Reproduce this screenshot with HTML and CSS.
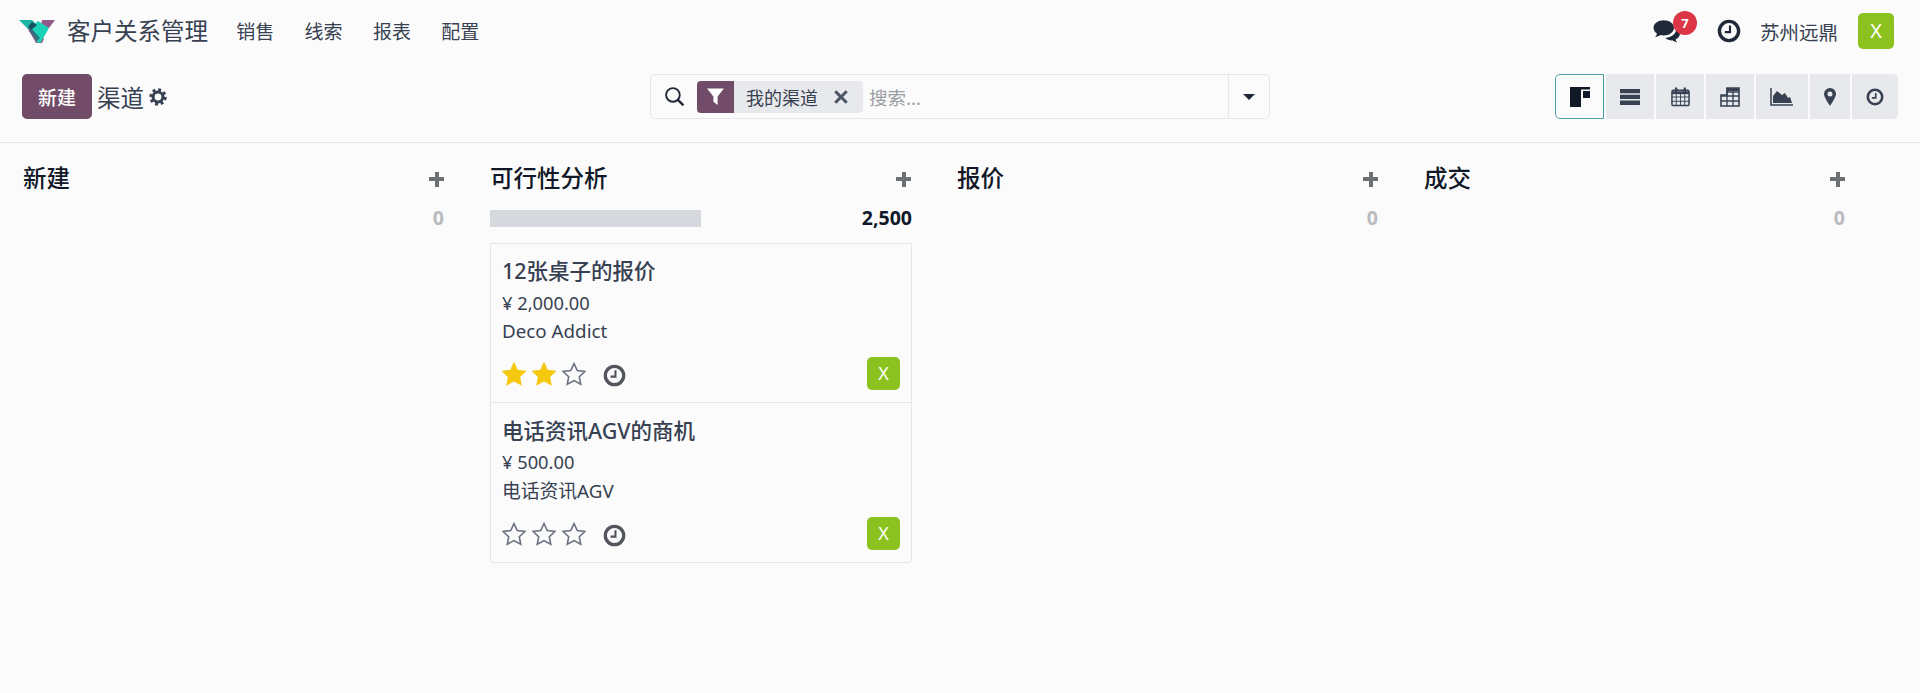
FILE: index.html

```html
<!DOCTYPE html>
<html lang="zh">
<head>
  <meta charset="UTF-8">
  <meta name="viewport" content="width=device-width, initial-scale=1.0">
  <title>客户关系管理</title>
  <link rel="stylesheet" href="styles.css">
</head>
<body>

  <svg class="defs" width="0" height="0" aria-hidden="true">
    <symbol id="clock" viewBox="0 0 24 24">
      <circle cx="12" cy="12" r="9.6" fill="none" stroke="currentColor" stroke-width="3.4"/>
      <path d="M13 6.5v6.7H7.8" fill="none" stroke="currentColor" stroke-width="2.2"/>
    </symbol>
    <symbol id="star" viewBox="0 0 24 24">
      <path d="M12 1.6l3.3 6.9 7.500 1-5.500 5.200 1.400 7.500-6.700-3.600-6.700 3.600 1.400-7.500-5.500-5.200 7.500-1z"/>
    </symbol>
  </svg>

  <!-- Barra superior -->
  <header class="navbar">
    <svg class="logo" viewBox="0 0 36 24" width="36" height="24">
      <path d="M0 1h13l5 5-7 6z" fill="#1ab5a5"/>
      <path d="M23 1h13l-6 8-8-3z" fill="#8f5a8c"/>
      <path d="M9 10l8 14h6l2-4-11-12z" fill="#8f5a8c"/>
      <path d="M12 8l7-6 11 7-8 14c-1 1-3 1-4 0z" fill="#19d2b8"/>
      <path d="M13 3l5 3-6 5-3-3z" fill="#17505f"/>
      <path d="M10 12l3-2 8 9-3 3z" fill="#2d6a78" opacity=".85"/>
    </svg>
    <span class="app-name">客户关系管理</span>
    <nav class="menu">
      <a>销售</a>
      <a>线索</a>
      <a>报表</a>
      <a>配置</a>
    </nav>
    <div class="systray">
      <div class="chat">
        <svg viewBox="0 0 26 22" width="28" height="24">
          <path d="M10 1C4.800 1 .5 4 .5 8c0 2.200 1.300 4.200 3.300 5.500-.4 1.200-1.100 2.300-1.900 3.200 1.800-.2 3.600-.9 5-1.900 1 .3 2 .4 3.100.4 5.200 0 9.500-3.200 9.500-7.200S15.200 1 10 1z" fill="#1f2937"/>
          <path d="M21.500 9c.2 4.500-4.200 8-10 8.500 1.500 1.500 4 2.300 6.500 2.200 1.300 1 2.800 1.700 4.500 1.900-.7-.8-1.200-1.700-1.500-2.800 2.500-1.100 4-3 4-5 0-2-1.500-3.800-3.500-4.800z" fill="#1f2937"/>
        </svg>
        <span class="badge">7</span>
      </div>
      <svg class="clock-top" width="24" height="24"><use href="#clock"/></svg>
      <span class="company">苏州远鼎</span>
      <span class="avatar avatar-big">X</span>
    </div>
  </header>

  <!-- Panel de control -->
  <section class="panel">
    <div class="panel-left">
      <button class="btn-new">新建</button>
      <span class="page-title">渠道</span>
      <svg class="gear" viewBox="0 0 20 20" width="18" height="18">
        <circle cx="10" cy="10" r="5.500" fill="none" stroke="currentColor" stroke-width="3.400"/>
        <circle cx="10" cy="10" r="8" fill="none" stroke="currentColor" stroke-width="3.400" stroke-dasharray="3.200 3.080"/>
      </svg>
    </div>

    <div class="search">
      <svg class="search-icon" viewBox="0 0 20 20" width="21" height="21">
        <circle cx="8.500" cy="8.500" r="6.500" fill="none" stroke="currentColor" stroke-width="1.800"/>
        <path d="M13 13l5.500 5.500" fill="none" stroke="currentColor" stroke-width="2.200"/>
      </svg>
      <div class="facet">
        <span class="facet-icon">
          <svg viewBox="0 0 18 18" width="19" height="19">
            <path d="M1 1.500h16L11 9v8l-4-3V9z" fill="#fff"/>
          </svg>
        </span>
        <span class="facet-text">我的渠道</span>
        <svg class="facet-close" viewBox="0 0 14 14" width="16" height="16">
          <path d="M2 2l10 10M12 2L2 12" fill="none" stroke="currentColor" stroke-width="2.600"/>
        </svg>
      </div>
      <span class="placeholder">搜索...</span>
      <span class="search-drop"><i class="caret"></i></span>
    </div>

    <div class="views">
      <span class="view view-on">
        <svg viewBox="0 0 20 20" width="20" height="20">
          <path d="M0 0h20v2.500H0zM0 2.500h11V20H0zM13 4h7v7h-7z" fill="#111827"/>
        </svg>
      </span>
      <span class="view">
        <svg viewBox="0 0 20 16" width="20" height="16">
          <path d="M0 0h20v4.300H0zM0 5.800h20v4.300H0zM0 11.600h20V16H0z" fill="currentColor"/>
        </svg>
      </span>
      <span class="view">
        <svg viewBox="0 0 20 20" width="19" height="20">
          <rect x="1" y="3" width="18" height="16" rx="1.500" fill="none" stroke="currentColor" stroke-width="1.600"/>
          <path d="M1 5.500h18" stroke="currentColor" stroke-width="3"/>
          <path d="M5.500 0v5M14.500 0v5" stroke="currentColor" stroke-width="2.400"/>
          <path d="M1 10h18M1 14.500h18M5.500 7v12M10 7v12M14.500 7v12" stroke="currentColor" stroke-width="1"/>
        </svg>
      </span>
      <span class="view">
        <svg viewBox="0 0 20 20" width="20" height="20">
          <path d="M7 1h12v18H1V8h6z" fill="none" stroke="currentColor" stroke-width="1.600"/>
          <path d="M7 1h12v3H7z" fill="currentColor"/>
          <path d="M1 9h18M1 14h18M7 1v18M13 1v18M7 5h12" stroke="currentColor" stroke-width="1.300"/>
        </svg>
      </span>
      <span class="view">
        <svg viewBox="0 0 24 18" width="24" height="18">
          <path d="M1 0v17h22" fill="none" stroke="currentColor" stroke-width="1.500"/>
          <path d="M3 15V8l4-5 5 4 3-2 3 5 2-1 2 6z" fill="currentColor"/>
        </svg>
      </span>
      <span class="view">
        <svg viewBox="0 0 12 18" width="12" height="18">
          <path fill-rule="evenodd" d="M6 0a6 6 0 0 0-6 6c0 3.300 6 12 6 12s6-8.700 6-12a6 6 0 0 0-6-6zm0 3.500a2.500 2.500 0 1 1 0 5 2.500 2.500 0 0 1 0-5z" fill="currentColor"/>
        </svg>
      </span>
      <span class="view">
        <svg width="18" height="18"><use href="#clock"/></svg>
      </span>
    </div>
  </section>

  <!-- Kanban -->
  <main class="kanban">
    <div class="columna">
      <div class="col-head"><h3>新建</h3><span class="plus"></span></div>
      <div class="col-total"><span class="total zero">0</span></div>
    </div>

    <div class="columna">
      <div class="col-head"><h3>可行性分析</h3><span class="plus"></span></div>
      <div class="col-total">
        <span class="barra"></span>
        <span class="total">2,500</span>
      </div>
      <div class="tarjetas">
        <article class="tarjeta">
          <h4>12张桌子的报价</h4>
          <p class="precio">¥ 2,000.00</p>
          <p>Deco Addict</p>
          <div class="tarjeta-pie">
            <svg class="star star-on" width="24" height="24"><use href="#star"/></svg>
            <svg class="star star-on" width="24" height="24"><use href="#star"/></svg>
            <svg class="star" width="24" height="24"><use href="#star"/></svg>
            <svg class="clock-card" width="23" height="23"><use href="#clock"/></svg>
            <span class="avatar">X</span>
          </div>
        </article>
        <article class="tarjeta">
          <h4>电话资讯AGV的商机</h4>
          <p class="precio">¥ 500.00</p>
          <p class="cliente">电话资讯AGV</p>
          <div class="tarjeta-pie">
            <svg class="star" width="24" height="24"><use href="#star"/></svg>
            <svg class="star" width="24" height="24"><use href="#star"/></svg>
            <svg class="star" width="24" height="24"><use href="#star"/></svg>
            <svg class="clock-card" width="23" height="23"><use href="#clock"/></svg>
            <span class="avatar">X</span>
          </div>
        </article>
      </div>
    </div>

    <div class="columna">
      <div class="col-head"><h3>报价</h3><span class="plus"></span></div>
      <div class="col-total"><span class="total zero">0</span></div>
    </div>

    <div class="columna">
      <div class="col-head"><h3>成交</h3><span class="plus"></span></div>
      <div class="col-total"><span class="total zero">0</span></div>
    </div>
  </main>

</body>
</html>
```

FILE: styles.css

```css
body {
  font-family: "Noto Sans", "Noto Sans CJK SC", sans-serif;
  background-color: #fbfbfc;
  color: #374151;
  margin: 0;
  height: 693px;
  overflow: hidden;
}

.defs {
  position: absolute;
}

h3, h4, p {
  margin: 0;
}

/* Barra superior */
.navbar {
  display: flex;
  align-items: center;
  height: 60px;
  padding: 2px 26px 0 19px;
  box-sizing: border-box;
}

.logo {
  margin-right: 12px;
}

.app-name {
  font-size: 23.500px;
  line-height: 30px;
}

.menu {
  display: flex;
  margin-left: 13px;
}

.menu a {
  font-size: 19px;
  padding: 0 15.200px;
}

.systray {
  display: flex;
  align-items: center;
  margin-left: auto;
}

.chat {
  position: relative;
  display: flex;
  margin-right: 36px;
  left: 1px;
}

.badge {
  position: absolute;
  top: -8px;
  left: 20px;
  width: 24px;
  height: 24px;
  border-radius: 50%;
  background-color: #dc3545;
  color: #fff;
  font-size: 13px;
  font-weight: 700;
  line-height: 24px;
  text-align: center;
}

.clock-top {
  color: #1f2937;
  margin-left: 1px;
  margin-right: 19px;
}

.company {
  font-size: 19.500px;
  margin-right: 20px;
}

.avatar {
  display: block;
  width: 33px;
  height: 33px;
  margin-left: auto;
  border-radius: 5px;
  background-color: #8cc220;
  color: #fff;
  font-size: 18px;
  line-height: 33px;
  text-align: center;
}

.avatar-big {
  width: 36px;
  height: 36px;
  margin-left: 0;
  font-size: 20px;
  line-height: 36px;
}

/* Panel de control */
.panel {
  display: grid;
  grid-template-columns: 1fr 620px 1fr;
  align-items: center;
  height: 83px;
  padding: 14px 22px 23px 22px;
  box-sizing: border-box;
  border-bottom: 1px solid #e5e7eb;
}

.panel-left {
  display: flex;
  align-items: center;
}

.btn-new {
  width: 70px;
  height: 45px;
  padding: 0;
  border: none;
  border-radius: 5px;
  background-color: #714b67;
  color: #fff;
  font-family: inherit;
  font-size: 19px;
  font-weight: 500;
  cursor: pointer;
}

.page-title {
  font-size: 23.500px;
  margin-left: 5px;
}

.gear {
  margin-left: 5px;
  color: #374151;
}

.search {
  display: flex;
  align-items: center;
  height: 45px;
  box-sizing: border-box;
  border: 1px solid #e5e7eb;
  border-radius: 5px;
}

.search-icon {
  margin: 0 12px 0 13px;
  color: #1f2937;
}

.facet {
  display: flex;
  align-items: center;
  width: 166px;
  height: 32px;
  border-radius: 4px;
  background-color: #e7e9ed;
  overflow: hidden;
}

.facet-icon {
  display: flex;
  align-items: center;
  justify-content: center;
  width: 37px;
  height: 32px;
  background-color: #714b67;
}

.facet-text {
  font-size: 18px;
  margin-left: 12px;
}

.facet-close {
  margin-left: 15px;
  color: #4b5563;
}

.placeholder {
  font-size: 18.500px;
  color: #9a9da3;
  margin-left: 6px;
}

.search-drop {
  display: flex;
  align-items: center;
  justify-content: center;
  width: 40px;
  height: 100%;
  margin-left: auto;
  border-left: 1px solid #e5e7eb;
}

.caret {
  border-top: 6px solid #1f2937;
  border-left: 6px solid transparent;
  border-right: 6px solid transparent;
}

.views {
  display: flex;
  justify-content: flex-end;
  gap: 2px;
}

.view {
  display: flex;
  align-items: center;
  justify-content: center;
  width: 48px;
  height: 45px;
  background-color: #e7e9ed;
  color: #374151;
}

.view:nth-child(5) {
  width: 52px;
}

.view:nth-child(6) {
  width: 40px;
}

.view:nth-child(7) {
  width: 46px;
  border-radius: 0 5px 5px 0;
}

.view-on {
  width: 47px;
  background-color: #fbfbfc;
  border: 1px solid #4e9ca6;
  height: 43px;
  border-radius: 5px 0 0 5px;
}

/* Kanban */
.kanban {
  display: flex;
  gap: 45px;
  padding: 0 23px;
}

.columna {
  width: 422px;
}

.col-head {
  display: flex;
  align-items: center;
  justify-content: space-between;
  height: 32px;
  margin-top: 20px;
}

.col-head h3 {
  color: #111827;
  font-size: 23.500px;
  font-weight: 500;
  margin-bottom: 5px;
}

.plus {
  width: 15px;
  height: 15px;
  margin-right: 1px;
  background:
    linear-gradient(#6b7075, #6b7075) center / 100% 4px no-repeat,
    linear-gradient(#6b7075, #6b7075) center / 4px 100% no-repeat;
}

.col-total {
  display: flex;
  align-items: center;
  justify-content: space-between;
  height: 24px;
  margin-top: 11px;
}

.barra {
  width: 211px;
  height: 17px;
  background-color: #d5d8dc;
}

.total {
  font-size: 19.500px;
  font-weight: 700;
  color: #111827;
  padding-bottom: 2px;
}

.zero {
  margin-left: auto;
  color: #b9bbbe;
  margin-right: 1px;
}

.tarjetas {
  margin-top: 13px;
  border: 1px solid #e4e6ea;
  border-radius: 0 0 3px 3px;
}

.tarjeta {
  height: 158px;
  padding: 12px 11px 0 11px;
  box-sizing: border-box;
}

.tarjeta + .tarjeta {
  border-top: 1px solid #e4e6ea;
  height: 160px;
  padding-top: 13px;
}

.tarjeta h4 {
  font-size: 21.500px;
  font-weight: 500;
  line-height: 30px;
  margin-bottom: 2px;
}

.tarjeta + .tarjeta h4 {
  margin-bottom: 1px;
}

.tarjeta p {
  font-size: 18.800px;
  line-height: 29px;
}

.tarjeta .precio {
  font-size: 18.300px;
}

.tarjeta .cliente {
  margin-top: 1px;
}

.tarjeta-pie {
  display: flex;
  align-items: center;
  gap: 6px;
  margin-top: 11px;
}

.star {
  fill: transparent;
  stroke: #6b7280;
  stroke-width: 1.600;
}

.star-on {
  fill: #f5c90f;
  stroke: #f5c90f;
}

.clock-card {
  margin: 3px 0 0 11px;
  color: #52565c;
}
```
